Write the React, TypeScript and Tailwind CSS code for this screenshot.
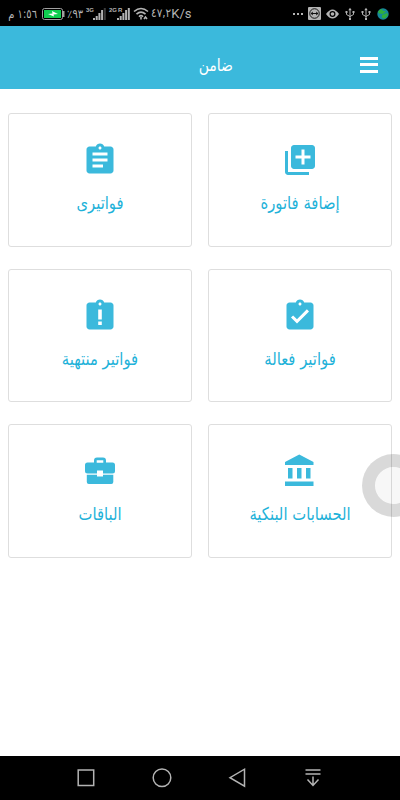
import React from "react";
import { MdAssignment, MdAssignmentTurnedIn } from "react-icons/md";

const LibraryAddIcon = () => (
  <svg viewBox="0 0 24 24" fill="currentColor" className="size-9">
    <path d="M4 6H2v14c0 1.1.9 2 2 2h14v-2H4V6zm16-4H8c-1.1 0-2 .9-2 2v12c0 1.1.9 2 2 2h12c1.1 0 2-.9 2-2V4c0-1.1-.9-2-2-2zm-1 9h-4v4h-2v-4H9V9h4V5h2v4h4v2z" />
  </svg>
);

const LateIcon = () => (
  <svg viewBox="0 0 24 24" fill="currentColor" className="size-9">
    <path d="M19 3h-4.180C14.400 1.840 13.300 1 12 1s-2.400.840-2.820 2H5c-1.100 0-2 .900-2 2v14c0 1.100.900 2 2 2h14c1.100 0 2-.900 2-2V5c0-1.100-.900-2-2-2zm-5.800 15h-2.400v-2.400h2.400zm0-3.700h-2.400V7.700h2.400zM12 5c-.550 0-1-.450-1-1s.450-1 1-1 1 .450 1 1-.450 1-1 1z" />
  </svg>
);

const BankIcon = () => (
  <svg viewBox="0 0 24 24" fill="currentColor" className="size-9">
    <path d="M4 10v7h3v-7H4zm6 0v7h3v-7h-3zM2 22h19v-3H2v3zm14-12v7h3v-7h-3zm-4.500-9L2 6v2h19V6l-9.500-5z" />
  </svg>
);

const BriefcaseIcon = () => (
  <svg viewBox="0 0 36 36" fill="currentColor" className="size-9">
    <path
      fillRule="evenodd"
      d="M12 9.500V7.500a3 3 0 0 1 3-3h6a3 3 0 0 1 3 3v2h6.500A2.500 2.500 0 0 1 33 12v6a2.500 2.500 0 0 1-2.500 2.500H21v-3h-6v3H5.500A2.500 2.500 0 0 1 3 18v-6a2.500 2.500 0 0 1 2.500-2.500zm2.700.300h6.600V7.200h-6.600z"
    />
    <path d="M4.800 21.800H15V23.500h6v-1.700h10.300v7.200a2 2 0 0 1-2 2H6.800a2 2 0 0 1-2-2z" />
  </svg>
);

interface MenuItem {
  label: string;
  icon: React.ReactNode;
}

const items: MenuItem[] = [
  { label: "إضافة فاتورة", icon: <LibraryAddIcon /> },
  { label: "فواتيرى", icon: <MdAssignment className="size-9" /> },
  { label: "فواتير فعالة", icon: <MdAssignmentTurnedIn className="size-9" /> },
  { label: "فواتير منتهية", icon: <LateIcon /> },
  { label: "الحسابات البنكية", icon: <BankIcon /> },
  { label: "الباقات", icon: <BriefcaseIcon /> },
];

const SignalIcon = ({ full }: { full?: boolean }) => (
  <svg viewBox="0 0 13 12" className="h-3 w-[13px] shrink-0" fill="#b4b4b4">
    <path d="M0 10h2v2H0zM2.700 8h2v4h-2zM5.400 5h2v7h-2zM8.100 2h2v10h-2z" />
    <path d="M10.800 0h2v12h-2z" fill={full ? "#b4b4b4" : "#3a3a3a"} />
  </svg>
);

const UsbIcon = () => (
  <svg viewBox="0 0 10 14" className="h-3.5 w-2.5" fill="none" stroke="#b4b4b4" strokeWidth="1">
    <path d="M5 2v10M1.500 5v2.500L5 9.500l3.500-2V5" />
    <path d="M3.300 3.300 5 .8l1.700 2.500zM.5 4h2v2h-2zM7.500 4h2v2h-2zM4 11h2v2H4z" fill="#b4b4b4" stroke="none" />
  </svg>
);

const StatusBar = () => (
  <div dir="ltr" className="flex h-[26px] shrink-0 items-center justify-between bg-black pl-[9px] pr-[11px] pt-px text-[#b4b4b4]">
    <div className="flex items-center">
      <span dir="rtl" className="w-[28px] scale-y-120 whitespace-nowrap text-[10px]">١:٥٦ م</span>
      <svg viewBox="0 0 23 12" className="ml-[5px] h-3 w-[23px] shrink-0">
        <rect x=".5" y=".5" width="20" height="11" rx="2" fill="#000" stroke="#a0a0a0" />
        <rect x="2" y="2" width="17" height="8" fill="#10cf50" />
        <path d="M21 3h1.500v6H21z" fill="#a0a0a0" />
        <path d="m6 6 4.500-.5L10 3l6 3-4.500.5.5 2z" fill="#fff" />
      </svg>
      <span className="ml-0.5 w-[19px] scale-y-120 whitespace-nowrap text-[10px]">٪٩٣</span>
      <span className="mb-2 w-[7px] whitespace-nowrap font-['Liberation_Sans'] text-[6px] font-bold leading-none">3G</span>
      <SignalIcon />
      <span className="mb-2 ml-[3px] w-2 whitespace-nowrap font-['Liberation_Sans'] text-[6px] font-bold leading-none tracking-[-0.2px]">2G R</span>
      <SignalIcon full />
      <svg viewBox="0 0 16 13" className="ml-[3px] h-[13px] w-4 shrink-0" fill="none" stroke="#b4b4b4" strokeWidth="1.600">
        <path d="M1 4.500q7-6 14 0M3.500 7.200q4.500-4 9 0M6 9.700q2-2 4 0" />
        <path d="M8 10v2.500M11 12l1.500-2 1.500 2" />
      </svg>
      <span className="ml-0.5 scale-y-115 whitespace-nowrap text-[10.500px]">٤٧,٢</span>
      <span className="font-[Roboto] text-[13px]">K/s</span>
    </div>
    <div className="flex items-center gap-[6px]">
      <svg viewBox="0 0 10 2" className="-mr-px h-0.5 w-2.5" fill="#b4b4b4">
        <path d="M0 0h2v2H0zM4 0h2v2H4zM8 0h2v2H8z" />
      </svg>
      <svg viewBox="0 0 12 12" className="-mr-px size-[13px]">
        <rect width="12" height="12" rx="1" fill="#b4b4b4" />
        <circle cx="6" cy="6" r="4.400" fill="none" stroke="#111" strokeWidth=".9" />
        <path d="m2.400 6 2-1.800v1.300h3.200V4.200l2 1.800-2 1.800V6.500H4.400v1.300z" fill="#111" />
      </svg>
      <svg viewBox="0 0 13 10" className="h-2.5 w-[13px]">
        <path d="M0 5q6.500-9 13 0-6.500 9-13 0" fill="#b4b4b4" />
        <circle cx="6.500" cy="5" r="2.400" fill="none" stroke="#000" strokeWidth="1.200" />
      </svg>
      <UsbIcon />
      <UsbIcon />
      <svg viewBox="0 0 12 12" className="size-3">
        <circle cx="6" cy="6" r="5.700" fill="#16889c" />
        <path d="M1 4 2.500 2 5 1l1 2h3L6 6 2 5.500zM5 7l5-2 1 2-3 3.500-3-.5z" fill="#2fae3c" />
      </svg>
    </div>
  </div>
);

const NavBar = () => (
  <div dir="ltr" className="flex h-11 shrink-0 items-center justify-center gap-[53.500px] bg-black pr-px">
    <svg viewBox="0 0 22 22" className="size-[22px]" fill="none" stroke="#b4b4b4" strokeWidth="1.500">
      <rect x="3.200" y="3" width="15.500" height="15.500" />
    </svg>
    <svg viewBox="0 0 22 22" className="size-[22px]" fill="none" stroke="#b4b4b4" strokeWidth="1.500">
      <circle cx="11" cy="10.700" r="8.800" />
    </svg>
    <svg viewBox="0 0 22 22" className="size-[22px]" fill="none" stroke="#b4b4b4" strokeWidth="1.500">
      <path d="M18.500 2.200v17L4 10.700z" />
    </svg>
    <svg viewBox="0 0 22 22" className="size-[22px]" fill="none" stroke="#b4b4b4" strokeWidth="1.500">
      <path d="M3.500 3h15M3.500 7h15M11 9.500v9M5.500 12.500l5.500 6 5.500-6" />
    </svg>
  </div>
);

const App: React.FC = () => {
  return (
    <div
      dir="rtl"
      className="relative flex h-[800px] w-[400px] flex-col overflow-hidden bg-white font-['DejaVu_Sans',sans-serif]"
    >
      <StatusBar />

      {/* Header */}
      <header className="flex h-[63px] shrink-0 items-center bg-[#3bb9dc] pr-[22px] pt-[14px] text-white">
        <button className="flex w-[18px] flex-col gap-[3.500px]">
          <span className="h-[3px] w-full bg-white" />
          <span className="h-[3px] w-full bg-white" />
          <span className="h-[3px] w-full bg-white" />
        </button>
        <h1 className="mr-[127px] scale-y-120 whitespace-nowrap text-[14px] leading-6">ضامن</h1>
      </header>

      {/* Menu */}
      <main className="grid flex-1 auto-rows-[133.500px] grid-cols-2 content-start gap-x-4 gap-y-[22px] px-2 pt-6">
        {items.map((item) => (
          <div
            key={item.label}
            className="flex flex-col items-center rounded-[3px] border border-[#dedede] pt-7 text-[#3bb9dc]"
          >
            {item.icon}
            <p className="mt-[13px] scale-y-120 whitespace-nowrap text-[14.800px] leading-6 text-[#1fb2d9]">
              {item.label}
            </p>
          </div>
        ))}
      </main>

      <NavBar />

      {/* Floating assistive button */}
      <div className="absolute left-[362px] top-[454px] size-[63px] rounded-full border-[13.500px] border-black/15 bg-black/[0.03] bg-clip-padding" />
    </div>
  );
};

export default App;
